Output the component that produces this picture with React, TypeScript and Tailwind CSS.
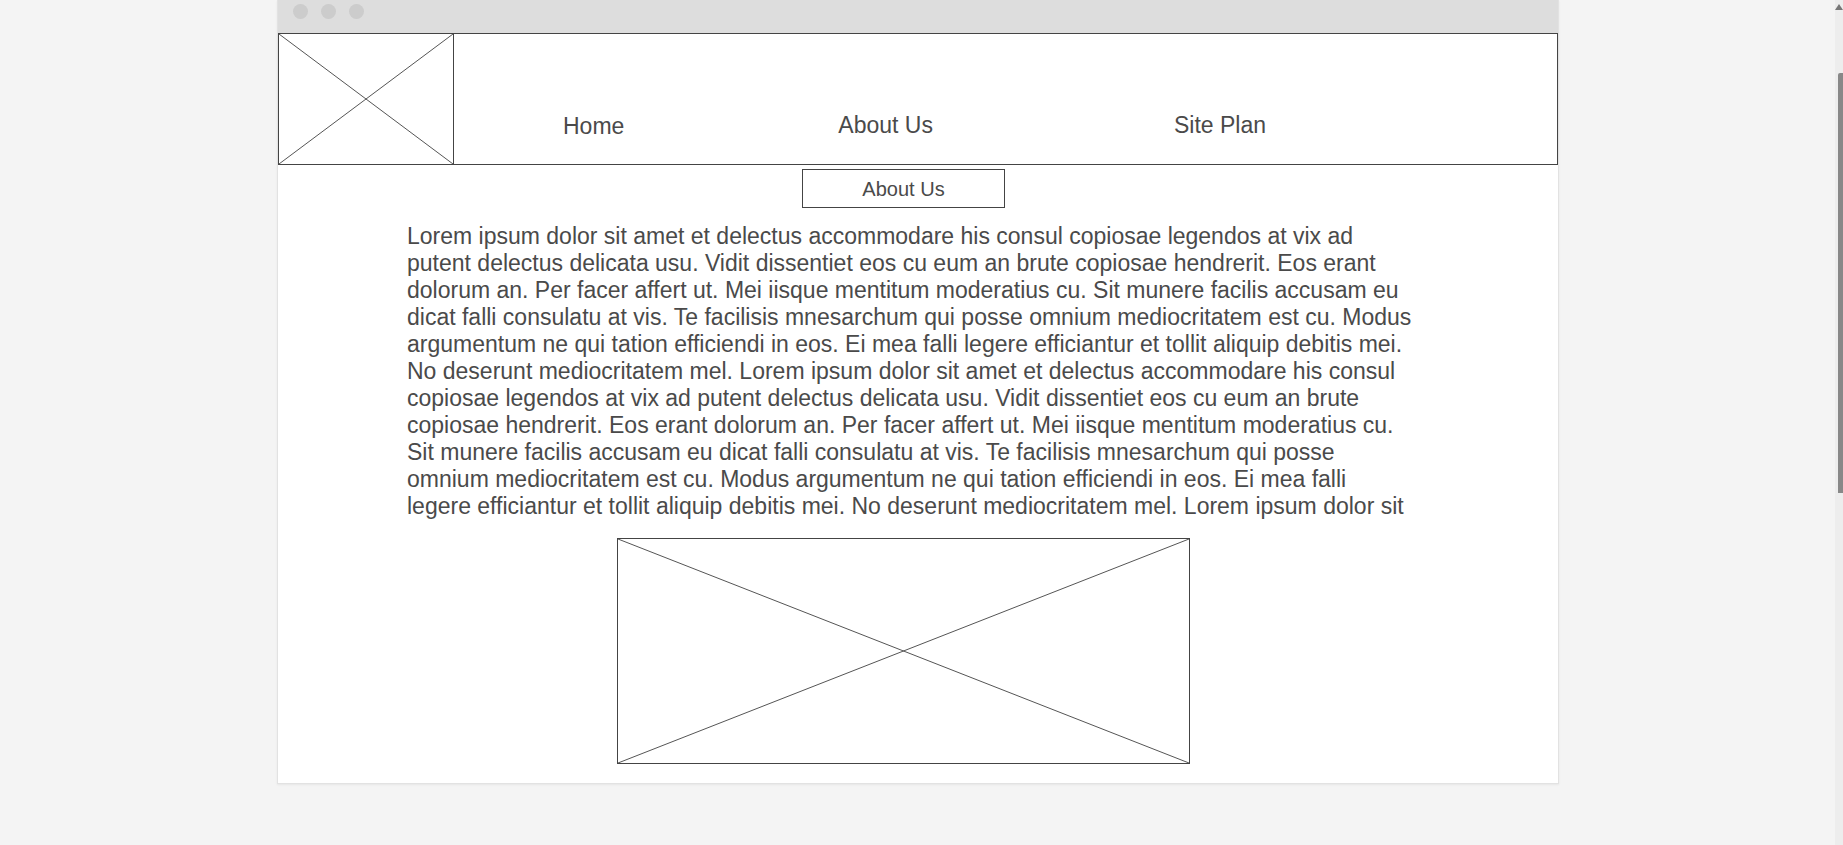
const Cross = ({ className }: { className?: string }) => (
  <svg className={className} viewBox="0 0 100 100" preserveAspectRatio="none">
    <line x1="0" y1="0" x2="100" y2="100" stroke="#555" strokeWidth="1" vectorEffect="non-scaling-stroke" />
    <line x1="100" y1="0" x2="0" y2="100" stroke="#555" strokeWidth="1" vectorEffect="non-scaling-stroke" />
  </svg>
);

const lorem =
  "Lorem ipsum dolor sit amet et delectus accommodare his consul copiosae legendos at vix ad putent delectus delicata usu. Vidit dissentiet eos cu eum an brute copiosae hendrerit. Eos erant dolorum an. Per facer affert ut. Mei iisque mentitum moderatius cu. Sit munere facilis accusam eu dicat falli consulatu at vis. Te facilisis mnesarchum qui posse omnium mediocritatem est cu. Modus argumentum ne qui tation efficiendi in eos. Ei mea falli legere efficiantur et tollit aliquip debitis mei. No deserunt mediocritatem mel. Lorem ipsum dolor sit amet et delectus accommodare his consul copiosae legendos at vix ad putent delectus delicata usu. Vidit dissentiet eos cu eum an brute copiosae hendrerit. Eos erant dolorum an. Per facer affert ut. Mei iisque mentitum moderatius cu. Sit munere facilis accusam eu dicat falli consulatu at vis. Te facilisis mnesarchum qui posse omnium mediocritatem est cu. Modus argumentum ne qui tation efficiendi in eos. Ei mea falli legere efficiantur et tollit aliquip debitis mei. No deserunt mediocritatem mel. Lorem ipsum dolor sit";

const App = () => {
  return (
    <div className="h-[845px] overflow-hidden bg-[#f4f4f4] font-['Liberation_Sans',Arial,sans-serif] text-[#4a4a4a]">
      {/* browser window */}
      <div className="ml-[277px] w-[1282px] border-x border-b border-[#e2e2e2] bg-white shadow-[0_1px_2px_rgba(0,0,0,0.06)]">
        <div className="h-[33px] bg-[#dddddd] flex items-start gap-[13px] pt-[4px] pl-[15px]">
          <div className="w-[15px] h-[15px] rounded-full bg-[#cccccc]"></div>
          <div className="w-[15px] h-[15px] rounded-full bg-[#cccccc]"></div>
          <div className="w-[15px] h-[15px] rounded-full bg-[#cccccc]"></div>
        </div>

        {/* header */}
        <div className="h-[132px] border border-[#444] flex">
          <div className="w-[175px] h-full border-r border-[#444] shrink-0">
            <Cross className="w-full h-full block" />
          </div>
          <nav className="flex items-end pb-[26px] text-[23px] leading-[26px]">
            <span className="ml-[109px] translate-y-[1px]">Home</span>
            <span className="ml-[214px]">About Us</span>
            <span className="ml-[241px]">Site Plan</span>
          </nav>
        </div>

        {/* title button */}
        <div className="mt-[4px] ml-[524px] w-[203px] h-[39px] border border-[#444] flex items-center justify-center text-[20px]">
          About Us
        </div>

        <p className="mt-[15px] ml-[129px] w-[1007px] text-[23px] leading-[27px]">{lorem}</p>

        <div className="mt-[18px] ml-[339px] w-[573px] h-[226px] border border-[#444]">
          <Cross className="w-full h-full block" />
        </div>
        <div className="h-[19px]"></div>
      </div>

      {/* page scrollbar */}
      <div className="fixed top-0 right-0 w-[8px] h-[845px] bg-[#ededed]">
        <div className="absolute top-[4px] right-0 w-0 h-0 border-l-[4px] border-r-[4px] border-b-[6px] border-l-transparent border-r-transparent border-b-[#777]"></div>
        <div className="absolute top-[73px] right-0 w-[5px] h-[420px] bg-[#888] rounded-tl-[2px]"></div>
      </div>
    </div>
  );
};

export default App;
